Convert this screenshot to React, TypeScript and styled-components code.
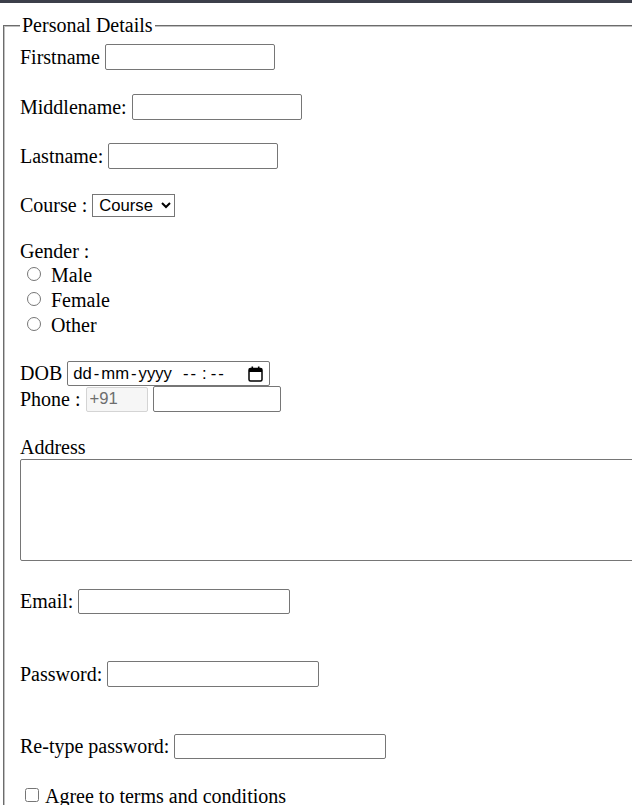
import React from 'react'
import styled, { createGlobalStyle } from 'styled-components'

const GlobalStyle = createGlobalStyle`
  html, body {
    margin: 0;
    padding: 0;
    background: #fff;
    overflow: hidden;
  }
  body {
    font-family: "Liberation Serif", "Times New Roman", serif;
    font-size: 20px;
    color: #000;
  }
`

const TopBar = styled.div`
  height: 3px;
  background: #3c3f4a;
`

const Fieldset = styled.fieldset`
  box-sizing: border-box;
  width: 720px;
  margin: 11px 0 0 3px;
  padding: 0 0 40px 15px;
  border: 2px groove #c0c0c0;
  min-width: 0;
`

const Legend = styled.legend`
  padding: 0 2px;
  line-height: 23px;
`

const Row = styled.div<{ $top?: number; $h?: number; $gap?: number }>`
  display: flex;
  align-items: center;
  gap: ${p => p.$gap ?? 5}px;
  margin-top: ${p => p.$top ?? 0}px;
  height: ${p => p.$h ?? 26}px;
  white-space: nowrap;
`

const Label = styled.label`
  line-height: 23px;
`

const TextInput = styled.input<{ $w?: number; $h?: number }>`
  box-sizing: border-box;
  width: ${p => p.$w ?? 170}px;
  height: ${p => p.$h ?? 26}px;
  margin: 0;
  padding: 1px 3px;
  border: 1px solid #767676;
  border-radius: 2px;
  font-family: "Liberation Sans", Arial, sans-serif;
  font-size: 16.67px;
  background: #fff;

  &:disabled {
    background: #f6f6f6;
    border-color: #d4d4d4;
    color: #6d6d6d;
  }
`

const Select = styled.select`
  box-sizing: border-box;
  width: 83px;
  height: 23px;
  margin: 0;
  padding: 0 2px;
  border: 1px solid #767676;
  border-radius: 0;
  font-family: "Liberation Sans", Arial, sans-serif;
  font-size: 16.67px;
  color: #000;
  background: #fff;
`

const Radio = styled.input`
  width: 14px;
  height: 14px;
  margin: 0 10px 4px 7px;
`

const Check = styled.input`
  width: 14px;
  height: 14px;
  margin: 0 6px 2px 5px;
`

const DateBox = styled.div`
  box-sizing: border-box;
  display: flex;
  align-items: center;
  width: 203px;
  height: 25px;
  padding: 0 6px 0 5px;
  border: 1px solid #767676;
  border-radius: 2px;
  font-family: "Liberation Sans", Arial, sans-serif;
  font-size: 16.67px;
`

const DatePart = styled.span<{ $sp?: number; $mx?: number }>`
  letter-spacing: ${p => p.$sp ?? 0}px;
  margin: 0 ${p => p.$mx ?? 0}px;
`

const CalendarIcon = styled.svg`
  margin-left: auto;
  flex: none;
`

const TextArea = styled.textarea`
  box-sizing: border-box;
  display: block;
  width: 660px;
  height: 102px;
  margin: 0;
  border: 1px solid #767676;
  border-radius: 2px;
  resize: none;
`

export default function App() {
  return (
    <>
      <GlobalStyle />
      <TopBar />
      <Fieldset>
        <Legend>Personal Details</Legend>
        <Row $top={7}>
          <Label>Firstname</Label>
          <TextInput type="text" />
        </Row>
        <Row $top={24}>
          <Label>Middlename:</Label>
          <TextInput type="text" />
        </Row>
        <Row $top={23}>
          <Label>Lastname:</Label>
          <TextInput type="text" />
        </Row>
        <Row $top={24} $h={25}>
          <Label>Course :</Label>
          <Select defaultValue="Course">
            <option>Course</option>
          </Select>
        </Row>
        <Row $top={22} $h={23}>
          <Label>Gender :</Label>
        </Row>
        {['Male', 'Female', 'Other'].map(g => (
          <Row key={g} $h={25} $gap={0}>
            <Radio type="radio" name="gender" />
            <Label>{g}</Label>
          </Row>
        ))}
        <Row $top={23} $h={25}>
          <Label>DOB</Label>
          <DateBox>
            <DatePart>dd</DatePart>
            <DatePart $mx={2}>-</DatePart>
            <DatePart>mm</DatePart>
            <DatePart $mx={2}>-</DatePart>
            <DatePart>yyyy</DatePart>
            <DatePart $sp={2} style={{ marginLeft: 11 }}>--</DatePart>
            <DatePart $mx={4}>:</DatePart>
            <DatePart $sp={2}>--</DatePart>
            <CalendarIcon width="15" height="16" viewBox="0 0 15 16">
              <rect x="1" y="2.5" width="13" height="12.5" rx="1.5" fill="none" stroke="#000" strokeWidth="1.5" />
              <rect x="1" y="3" width="13" height="3" fill="#000" />
              <rect x="3.5" y="0.5" width="1.6" height="3" fill="#000" />
              <rect x="9.9" y="0.5" width="1.6" height="3" fill="#000" />
            </CalendarIcon>
          </DateBox>
        </Row>
        <Row>
          <Label>Phone :</Label>
          <TextInput type="text" $w={62} $h={25} defaultValue="+91" disabled />
          <TextInput type="text" $w={128} />
        </Row>
        <Row $top={24} $h={23}>
          <Label>Address</Label>
        </Row>
        <TextArea />
        <Row $top={28} $h={25}>
          <Label>Email:</Label>
          <TextInput type="email" $w={212} $h={25} />
        </Row>
        <Row $top={47}>
          <Label>Password:</Label>
          <TextInput type="password" $w={212} />
        </Row>
        <Row $top={47} $h={25}>
          <Label>Re-type password:</Label>
          <TextInput type="password" $w={212} $h={25} />
        </Row>
        <Row $top={25} $h={24} $gap={0}>
          <Check type="checkbox" />
          <Label>Agree to terms and conditions</Label>
        </Row>
      </Fieldset>
    </>
  )
}
